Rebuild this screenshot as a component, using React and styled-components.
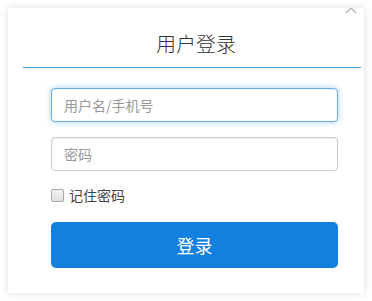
import styled, { createGlobalStyle } from "styled-components";

const GlobalStyle = createGlobalStyle`
  body {
    margin: 0;
    background: #ffffff;
    font-family: "Noto Sans CJK SC", "Noto Sans", sans-serif;
  }
`;

const Card = styled.div`
  position: relative;
  margin: 8px;
  width: 356px;
  height: 285px;
  background: #fff;
  box-shadow: 0 0 8px rgba(0, 0, 0, 0.14);
  overflow: hidden;
  box-sizing: border-box;
`;

const Close = styled.svg`
  position: absolute;
  top: -6px;
  right: 7px;
  width: 12px;
  height: 12px;
`;

const Header = styled.div`
  margin: 0 3px 0 15px;
  padding-top: 22px;
  height: 37px;
  border-bottom: 1px solid #4aa0dc;
  text-align: center;
  font-size: 20px;
  font-weight: 300;
  line-height: 28px;
  color: #333;
  padding-left: 8px;
`;

const Form = styled.form`
  display: flex;
  flex-direction: column;
  padding: 20px 26px 0 43px;
`;

const Input = styled.input`
  height: 34px;
  box-sizing: border-box;
  border: 1px solid ${(p) => (p.$focus ? "#66afe9" : "#ccc")};
  border-radius: 4px;
  padding: 0 12px;
  font-size: 14px;
  font-family: inherit;
  color: #333;
  margin-bottom: 15px;
  outline: none;
  box-shadow: ${(p) =>
    p.$focus
      ? "inset 0 1px 1px rgba(0,0,0,.075), 0 0 6px rgba(102,175,233,.6)"
      : "inset 0 1px 1px rgba(0,0,0,.075)"};
  &::placeholder {
    color: #999;
  }
`;

const Remember = styled.label`
  display: flex;
  align-items: center;
  gap: 5px;
  font-size: 14px;
  line-height: 18px;
  color: #444;
  height: 18px;
`;

const Check = styled.input`
  appearance: none;
  margin: 0;
  width: 13px;
  height: 13px;
  box-sizing: border-box;
  border: 1px solid #a8a8a8;
  border-radius: 2px;
  background: linear-gradient(#f4f4f4, #dedede);
`;

const Button = styled.button`
  margin-top: 18px;
  height: 46px;
  border: none;
  border-radius: 5px;
  background: #1380e0;
  color: #fff;
  font-size: 18px;
  font-family: inherit;
`;

export default function App() {
  return (
    <>
      <GlobalStyle />
      <Card>
        <Close viewBox="0 0 12 12">
          <path d="M1 1 L11 11 M11 1 L1 11" stroke="#bbb" strokeWidth="1.6" fill="none" />
        </Close>
        <Header>用户登录</Header>
        <Form onSubmit={(e) => e.preventDefault()}>
          <Input $focus placeholder="用户名/手机号" />
          <Input type="password" placeholder="密码" />
          <Remember>
            <Check type="checkbox" />
            记住密码
          </Remember>
          <Button type="submit">登录</Button>
        </Form>
      </Card>
    </>
  );
}
